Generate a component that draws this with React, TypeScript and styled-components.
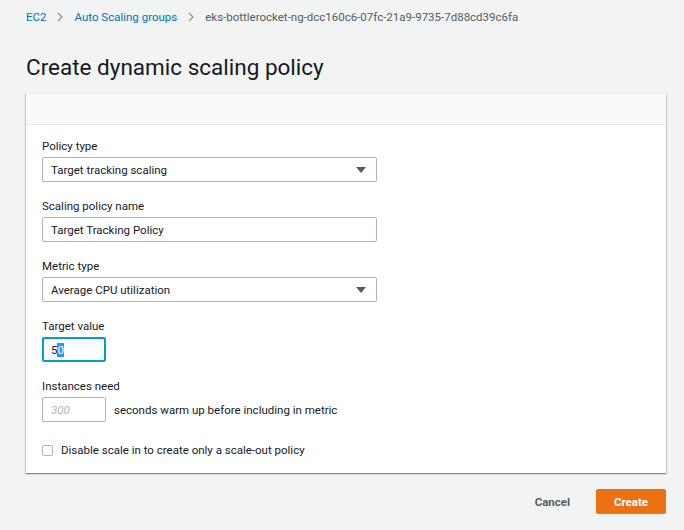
import React from "react";
import styled, { createGlobalStyle } from "styled-components";

const GlobalStyle = createGlobalStyle`
    html, body {
        margin: 0;
        padding: 0;
        background: #f2f3f3;
        font-family: Roboto, "Noto Sans", sans-serif;
        color: #16191f;
    }
`;

const Page = styled.div`
    width: 684px;
    height: 530px;
    padding: 0 18px 0 26px;
    box-sizing: border-box;
    display: flex;
    flex-direction: column;
`;

const Breadcrumbs = styled.nav`
    display: flex;
    align-items: center;
    height: 34px;
    font-size: 11.5px;
    gap: 10px;
`;

const Crumb = styled.a`
    color: #0073bb;
    text-decoration: none;
`;

const CrumbCurrent = styled.span`
    color: #545b64;
`;

const Chevron = styled.svg`
    width: 8px;
    height: 10px;
`;

const Title = styled.h1`
    font-size: 22.5px;
    font-weight: 400;
    margin: 19px 0 11px;
    line-height: 29px;
`;

const Panel = styled.div`
    background: #fff;
    box-shadow: 0 1px 1px 0 rgba(0, 28, 36, 0.3), 1px 1px 1px 0 rgba(0, 28, 36, 0.15), -1px 1px 1px 0 rgba(0, 28, 36, 0.15);
    border-top: 1px solid #eaeded;
    display: flex;
    flex-direction: column;
`;

const PanelHeader = styled.div`
    height: 30px;
    background: #fafafa;
    border-bottom: 1px solid #eaeded;
`;

const PanelBody = styled.div`
    padding: 14px 16px 16px;
    display: flex;
    flex-direction: column;
`;

const Field = styled.div`
    display: flex;
    flex-direction: column;
    margin-bottom: 17px;
`;

const Label = styled.label`
    font-size: 11.5px;
    line-height: 14px;
    margin-bottom: 4px;
`;

const SelectBox = styled.div`
    width: 335px;
    height: 25px;
    box-sizing: border-box;
    border: 1px solid #aab7b8;
    border-radius: 2px;
    font-size: 11.5px;
    display: flex;
    align-items: center;
    padding: 0 8px;
    justify-content: space-between;
`;

const Caret = styled.span`
    width: 0;
    height: 0;
    border-left: 5px solid transparent;
    border-right: 5px solid transparent;
    border-top: 6px solid #545b64;
    margin-right: 2px;
`;

const TextInput = styled.div<{ $width: number; $focused?: boolean; $placeholder?: boolean }>`
    width: ${(p) => p.$width}px;
    height: 25px;
    box-sizing: border-box;
    border: ${(p) => (p.$focused ? "2px solid #00a1c9" : "1px solid #aab7b8")};
    border-radius: 2px;
    font-size: 11.5px;
    display: flex;
    align-items: center;
    padding: 0 ${(p) => (p.$focused ? 7 : 8)}px;
    color: ${(p) => (p.$placeholder ? "#aab7b8" : "#16191f")};
    font-style: ${(p) => (p.$placeholder ? "italic" : "normal")};
`;

const Selected = styled.span`
    background: #3390ff;
    color: #fff;
`;

const InlineRow = styled.div`
    display: flex;
    align-items: center;
    gap: 8px;
    font-size: 11.5px;
`;

const CheckRow = styled.div`
    display: flex;
    align-items: center;
    gap: 8px;
    font-size: 11.5px;
    line-height: 13px;
    margin-top: 5px;
`;

const CheckBox = styled.span`
    width: 11px;
    height: 11px;
    border: 1px solid #aab7b8;
    border-radius: 2px;
    box-sizing: border-box;
`;

const Footer = styled.div`
    display: flex;
    justify-content: flex-end;
    align-items: center;
    margin-top: 16px;
    gap: 26px;
`;

const LinkButton = styled.button`
    background: none;
    border: none;
    font: 700 11.5px Roboto, sans-serif;
    color: #545b64;
    padding: 0;
`;

const PrimaryButton = styled.button`
    background: #ec7211;
    border: 1px solid #ec7211;
    border-radius: 2px;
    color: #fff;
    font: 700 11.5px Roboto, sans-serif;
    width: 70px;
    height: 25px;
`;

const ChevronIcon = () => (
    <Chevron viewBox="0 0 8 10">
        <path d="M2 1l4 4-4 4" fill="none" stroke="#879596" strokeWidth="1.2" />
    </Chevron>
);

export default function App() {
    return (
        <Page>
            <GlobalStyle />
            <Breadcrumbs>
                <Crumb href="#">EC2</Crumb>
                <ChevronIcon />
                <Crumb href="#">Auto Scaling groups</Crumb>
                <ChevronIcon />
                <CrumbCurrent>eks-bottlerocket-ng-dcc160c6-07fc-21a9-9735-7d88cd39c6fa</CrumbCurrent>
            </Breadcrumbs>
            <Title>Create dynamic scaling policy</Title>
            <Panel>
                <PanelHeader />
                <PanelBody>
                    <Field>
                        <Label>Policy type</Label>
                        <SelectBox>
                            Target tracking scaling
                            <Caret />
                        </SelectBox>
                    </Field>
                    <Field>
                        <Label>Scaling policy name</Label>
                        <TextInput $width={335}>Target Tracking Policy</TextInput>
                    </Field>
                    <Field>
                        <Label>Metric type</Label>
                        <SelectBox>
                            Average CPU utilization
                            <Caret />
                        </SelectBox>
                    </Field>
                    <Field>
                        <Label>Target value</Label>
                        <TextInput $width={64} $focused>
                            5<Selected>0</Selected>
                        </TextInput>
                    </Field>
                    <Field>
                        <Label>Instances need</Label>
                        <InlineRow>
                            <TextInput $width={64} $placeholder>300</TextInput>
                            seconds warm up before including in metric
                        </InlineRow>
                    </Field>
                    <CheckRow>
                        <CheckBox />
                        Disable scale in to create only a scale-out policy
                    </CheckRow>
                </PanelBody>
            </Panel>
            <Footer>
                <LinkButton>Cancel</LinkButton>
                <PrimaryButton>Create</PrimaryButton>
            </Footer>
        </Page>
    );
}
